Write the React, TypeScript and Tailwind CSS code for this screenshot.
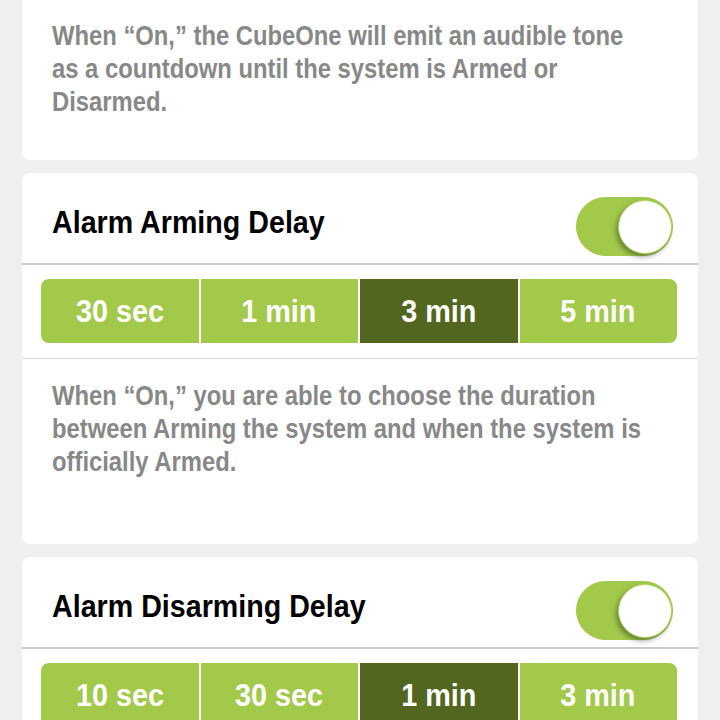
import React from "react";

const font = { fontFamily: '"Liberation Sans", Arial, sans-serif' };

function Cond({ children, className = "" }: { children: React.ReactNode; className?: string }) {
  return <span className={`inline-block whitespace-nowrap ${className}`}>{children}</span>;
}

function Toggle() {
  return (
    <div className="relative w-[97px] h-[59px] rounded-full bg-[#a2c94a] shrink-0">
      <div className="absolute right-[1px] top-[3px] w-[54px] h-[54px] rounded-full bg-white border border-[#b5d36a] shadow-[-2px_3px_5px_rgba(0,0,0,0.35)]" />
    </div>
  );
}

function Segments({ items, active }: { items: string[]; active: number }) {
  return (
    <div className="flex h-[64px] rounded-[8px] overflow-hidden gap-[2px] bg-white">
      {items.map((t, i) => (
        <div
          key={t}
          className={`flex-1 flex items-center justify-center text-white font-bold text-[32px] ${
            i === active ? "bg-[#52661f]" : "bg-[#a2c94a]"
          }`}
        >
          <Cond className="origin-center scale-x-[0.9]">{t}</Cond>
        </div>
      ))}
    </div>
  );
}

function Desc({ lines, className = "" }: { lines: string[]; className?: string }) {
  return (
    <div className={`pl-[30px] text-[#888888] font-bold text-[28px] leading-[33px] ${className}`}>
      {lines.map((l) => (
        <div key={l}>
          <Cond className="origin-left scale-x-[0.85]">{l}</Cond>
        </div>
      ))}
    </div>
  );
}

function Card({ title, items, active, lines }: { title: string; items: string[]; active: number; lines: string[] }) {
  return (
    <div className="bg-white rounded-[8px] mx-[22px]">
      <div className="flex justify-between pl-[30px] pr-[25px] h-[90px]">
        <div className="text-black font-bold text-[32px] leading-[38px] mt-[30px]">
          <Cond className="origin-left scale-x-[0.895]">{title}</Cond>
        </div>
        <div className="mt-[24px]">
          <Toggle />
        </div>
      </div>
      <div className="h-[2px] bg-[#c8c8c8]" />
      <div className="pl-[19px] pr-[21px] pt-[14px] pb-[15px]">
        <Segments items={items} active={active} />
      </div>
      <div className="h-[1px] bg-[#d6d6d6]" />
      <Desc lines={lines} className="pt-[20px] pb-[66px]" />
    </div>
  );
}

export default function App() {
  return (
    <div className="w-[720px] h-[720px] overflow-hidden bg-[#efefef]" style={font}>
      <div className="bg-white rounded-b-[8px] mx-[22px]">
        <Desc
          lines={[
            "When “On,” the CubeOne will emit an audible tone",
            "as a countdown until the system is Armed or",
            "Disarmed.",
          ]}
          className="pt-[19px] pb-[42px]"
        />
      </div>
      <div className="h-[13px]" />
      <Card
        title="Alarm Arming Delay"
        items={["30 sec", "1 min", "3 min", "5 min"]}
        active={2}
        lines={[
          "When “On,” you are able to choose the duration",
          "between Arming the system and when the system is",
          "officially Armed.",
        ]}
      />
      <div className="h-[13px]" />
      <Card
        title="Alarm Disarming Delay"
        items={["10 sec", "30 sec", "1 min", "3 min"]}
        active={2}
        lines={[]}
      />
    </div>
  );
}
